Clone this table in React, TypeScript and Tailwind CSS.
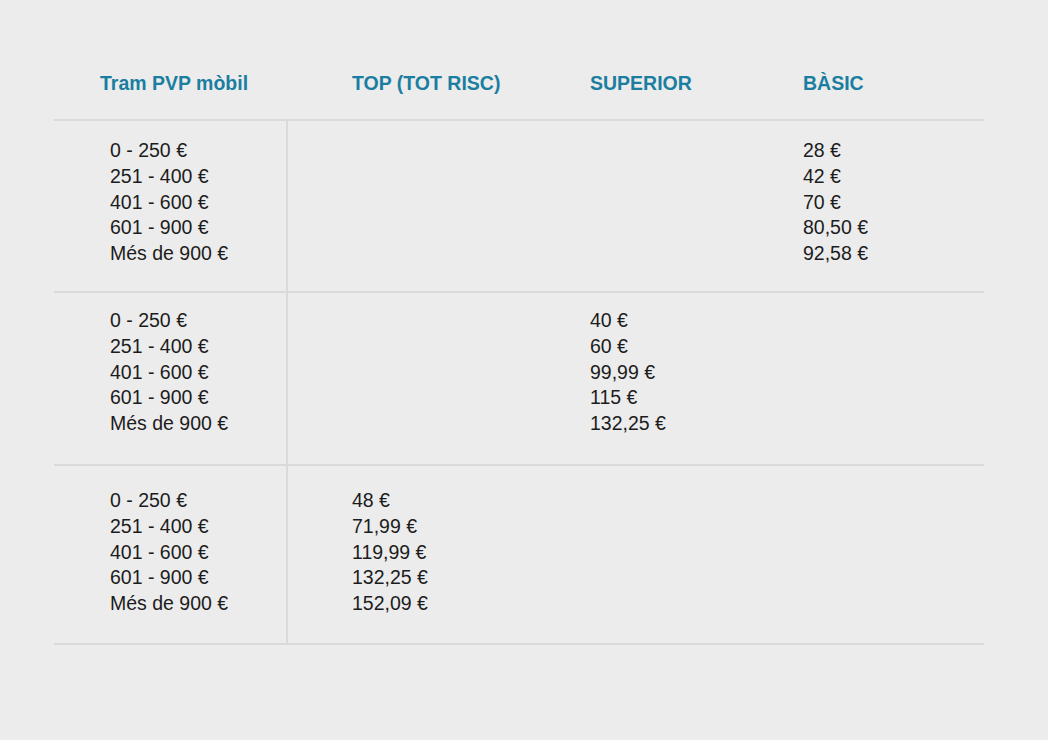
const rows = [
  { pad: 'pt-[17px]', h: 'h-[172px]', col: 3, prices: ['28 €', '42 €', '70 €', '80,50 €', '92,58 €'] },
  { pad: 'pt-[15px]', h: 'h-[173px]', col: 2, prices: ['40 €', '60 €', '99,99 €', '115 €', '132,25 €'] },
  { pad: 'pt-[22px]', h: 'h-[179px]', col: 1, prices: ['48 €', '71,99 €', '119,99 €', '132,25 €', '152,09 €'] },
];

const ranges = ['0 - 250 €', '251 - 400 €', '401 - 600 €', '601 - 900 €', 'Més de 900 €'];
const headers = ['TOP (TOT RISC)', 'SUPERIOR', 'BÀSIC'];
const colPad = ['pl-[64px]', 'pl-[66px]', 'pl-[66px]'];

function Lines({ items }: { items: string[] }) {
  return (
    <div className="flex flex-col">
      {items.map((s) => (
        <span key={s} className="leading-[25.75px]">
          {s}
        </span>
      ))}
    </div>
  );
}

export default function App() {
  return (
    <div className="w-[1048px] h-[740px] bg-[#ececec] font-['Liberation_Sans',Arial,sans-serif] text-[19.5px] text-[#1c1c1c]">
      <div className="ml-[54px] w-[930px] pt-[70px]">
        <div className="grid grid-cols-[234px_236px_213px_1fr] h-[51px] border-b-2 border-[#dadada] font-bold text-[#1b7ea0]">
          <div className="pl-[46px] leading-[26px]">Tram PVP mòbil</div>
          {headers.map((h, c) => (
            <div key={h} className={`${colPad[c]} leading-[26px]`}>
              {h}
            </div>
          ))}
        </div>
        {rows.map((r, i) => (
          <div key={i} className={`grid grid-cols-[234px_236px_213px_1fr] border-b-2 border-[#dadada] ${r.h}`}>
            <div className={`pl-[56px] border-r-2 border-[#dadada] ${r.pad}`}>
              <Lines items={ranges} />
            </div>
            {[1, 2, 3].map((c) => (
              <div key={c} className={`${colPad[c - 1]} ${r.pad}`}>
                {c === r.col && <Lines items={r.prices} />}
              </div>
            ))}
          </div>
        ))}
      </div>
    </div>
  );
}
